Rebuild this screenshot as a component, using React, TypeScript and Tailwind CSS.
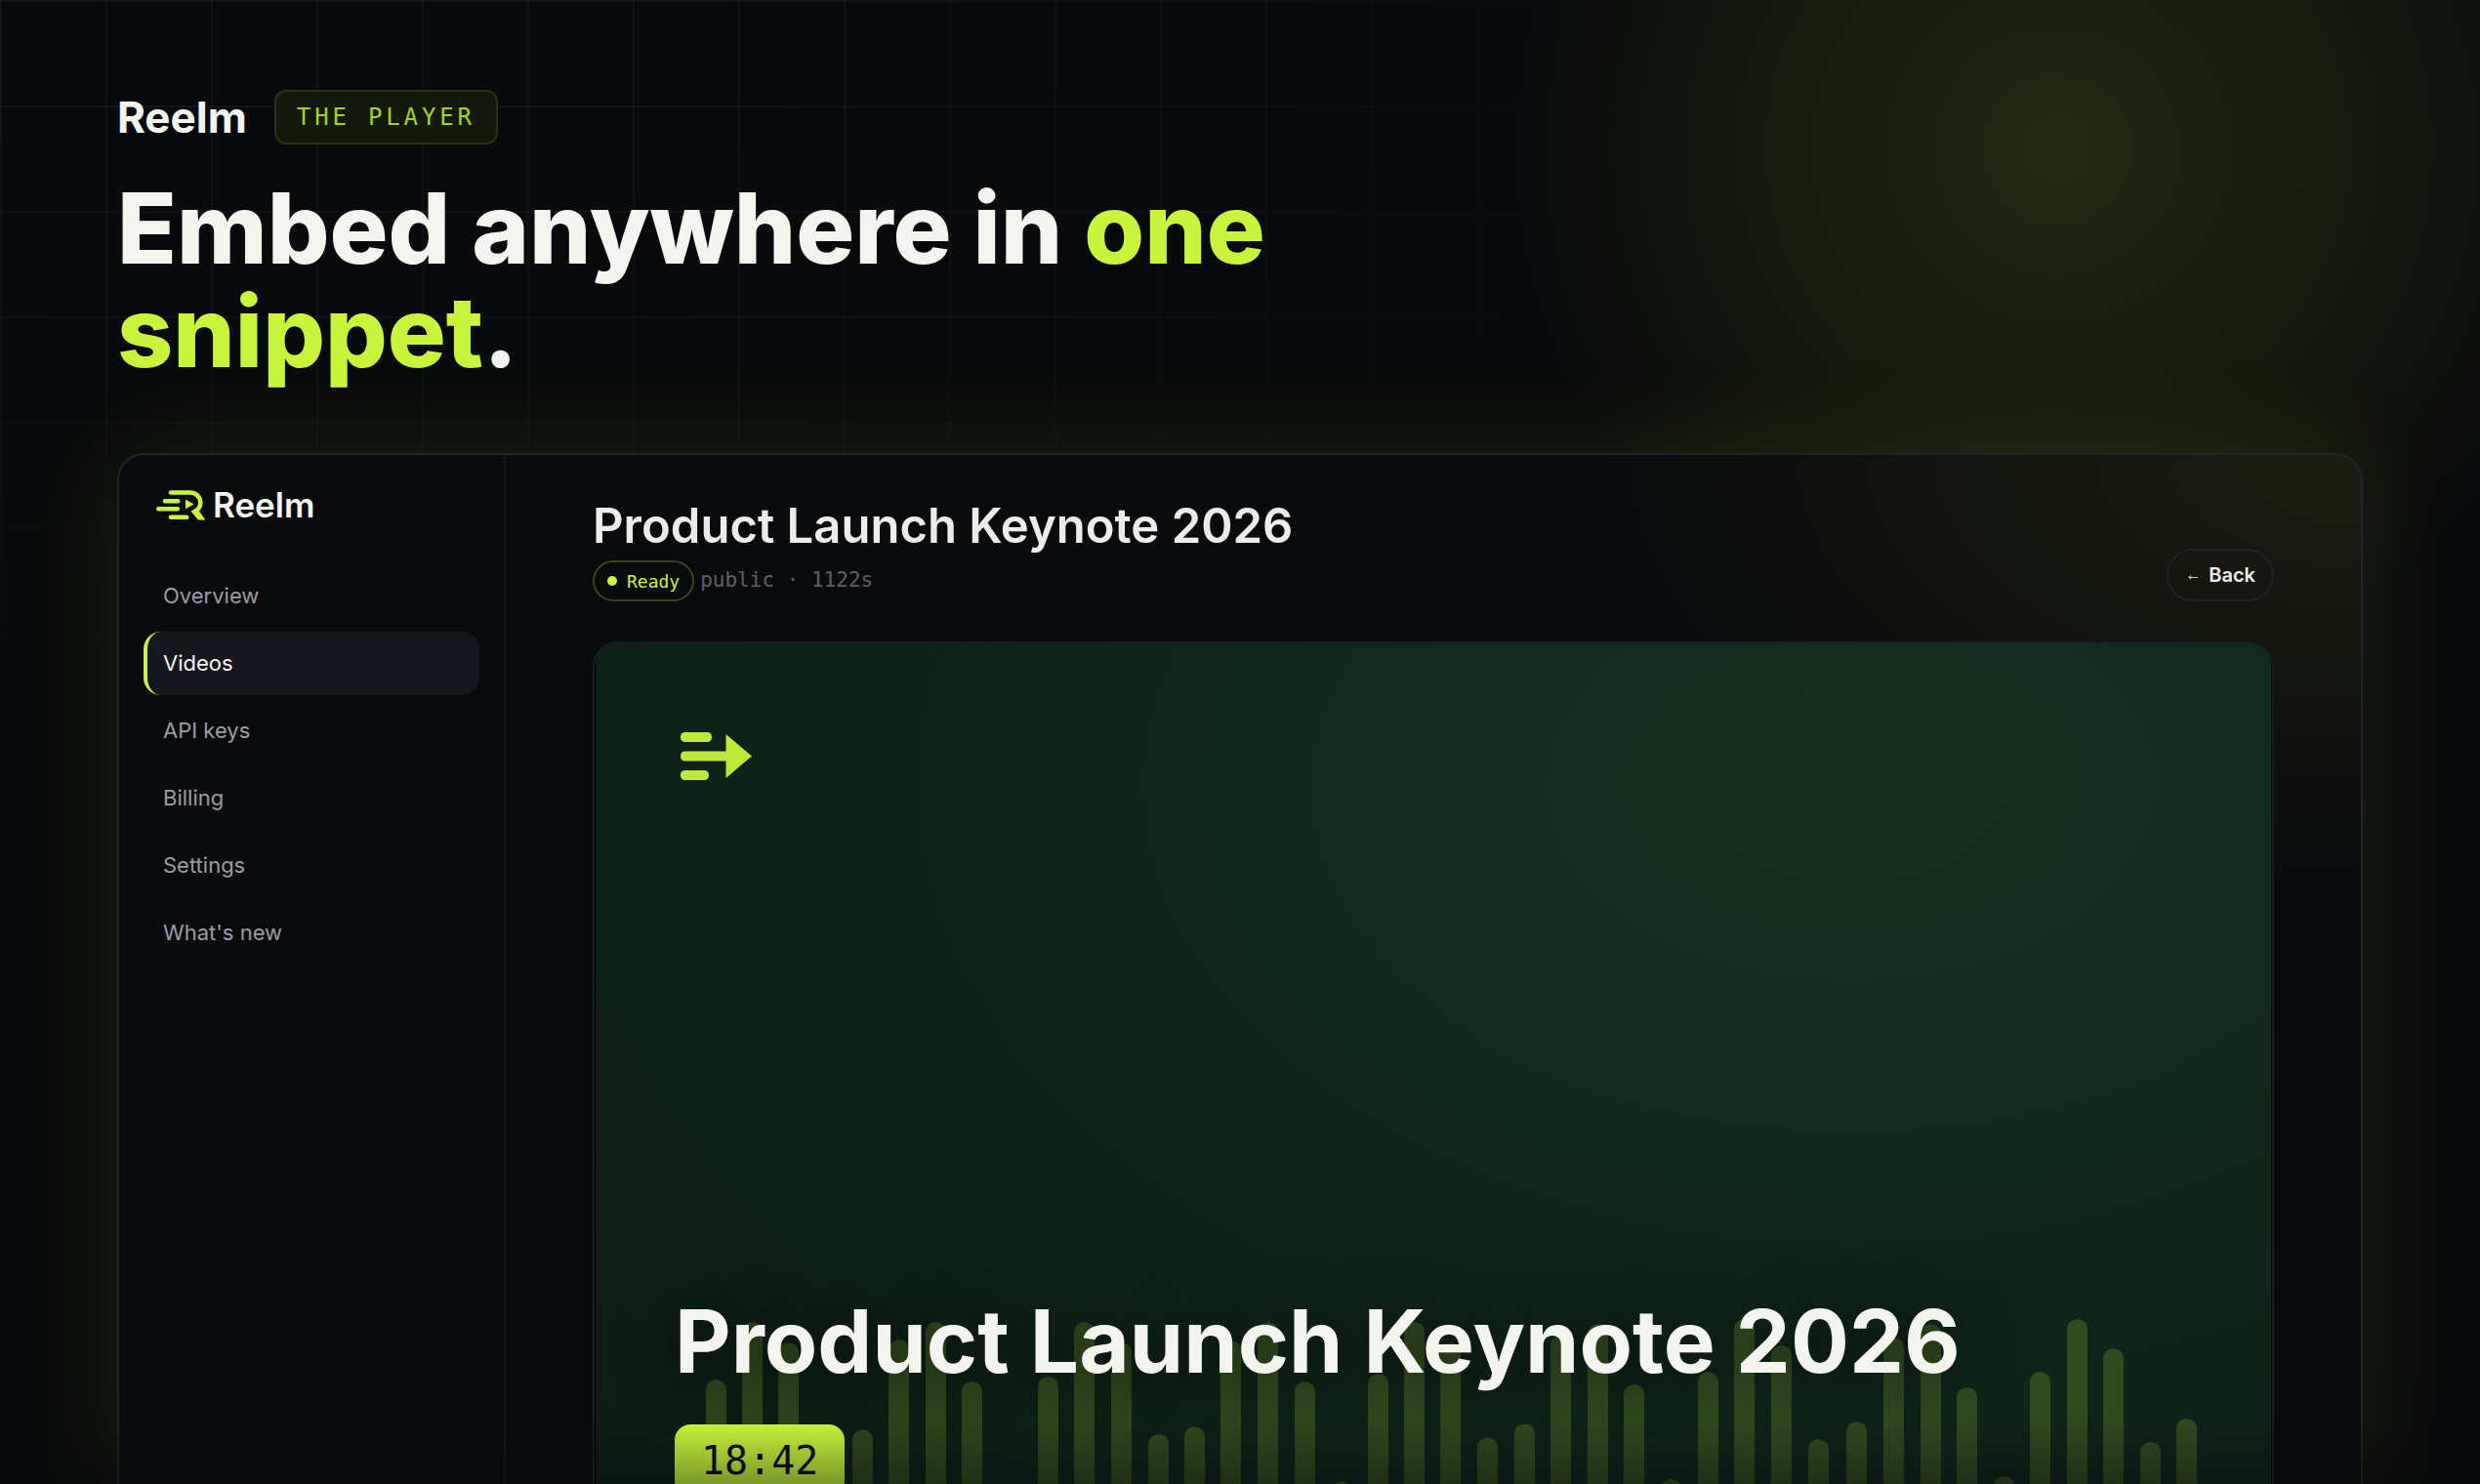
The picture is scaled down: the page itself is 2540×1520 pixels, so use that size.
import React from 'react';

const navItems = ['Overview', 'Videos', 'API keys', 'Billing', 'Settings', "What's new"];

// x and y of the top of each bar, in poster units (1716 x 965)
const bars: [number, number][] = [
  [113, 754], [150, 695], [187, 716], [225, 830], [263, 805], [300, 713], [338, 695], [375, 756], [413, 870],
  [453, 751], [490, 695], [528, 716], [566, 810], [603, 802], [640, 714], [678, 695], [716, 756], [754, 858],
  [791, 748], [828, 695], [865, 716], [903, 813], [941, 799], [978, 709], [1016, 697], [1053, 759], [1091, 856],
  [1129, 746], [1166, 692], [1204, 719], [1242, 815], [1281, 797], [1319, 711], [1357, 697], [1394, 762],
  [1432, 853], [1469, 746], [1507, 692], [1544, 722], [1582, 818], [1619, 794],
];

const LogoMark: React.FC = () => (
  <svg viewBox="0 0 50 31" className="h-[31px] w-[50px]" fill="none" aria-hidden="true">
    <path d="M15 2.500h19.500c6.500 0 10.800 4.700 10.800 10.300 0 3.800-2 7-5.300 8.600" stroke="#c8f43c" strokeWidth="4.600" strokeLinecap="round" />
    <path d="M35.500 21.500l6.500-3 2 3 6.300 9h-7.500z" fill="#c8f43c" />
    <path d="M9 11.300h13.200M2.300 19.300h19.500M15 27.700h16.200" stroke="#c8f43c" strokeWidth="4.600" strokeLinecap="round" />
    <path d="M30 9.500l8.500 5-8.500 4.700z" fill="#c8f43c" />
  </svg>
);

const Sidebar: React.FC = () => (
  <aside className="w-[396px] shrink-0 border-r-2 border-[#15171c] px-[25px] pt-[33px]">
    <a href="#" className="ml-[13px] flex h-[36px] items-center gap-2 text-[35px] leading-[36px] font-semibold text-[#f4f4ef]">
      <LogoMark />
      Reelm
    </a>
    <nav className="mt-[43px] flex flex-col gap-1">
      {navItems.map(item => (
        <a
          key={item}
          href="#"
          className={
            item === 'Videos'
              ? 'flex h-[65px] items-center rounded-[18px] border-l-4 border-[#c8f43c] bg-[#14171c] px-4 text-[22px] text-[#f4f4ef]'
              : 'flex h-[65px] items-center rounded-[18px] border-l-4 border-transparent px-4 text-[22px] text-[#9a9da6]'
          }
        >
          {item}
        </a>
      ))}
    </nav>
  </aside>
);

const Poster: React.FC = () => (
  <div className="mt-[41px] overflow-hidden rounded-[26px] border-2 border-[#1a1d23] bg-black px-px">
    <div className="relative aspect-video w-full bg-[radial-gradient(ellipse_at_75%_15%,#142f20,#10241a_55%,#0c1c14)]">
      <svg viewBox="0 0 1716 965" className="absolute inset-0 h-full w-full" aria-hidden="true">
        {bars.map(([x, y]) => (
          <rect key={x} x={x} y={y} width="21" height={965 - y} rx="10" fill="#c8f43c" fillOpacity="0.18" />
        ))}
      </svg>
      <div className="relative flex h-full flex-col px-[81px] pt-[91px]">
        <svg viewBox="0 0 74 50" className="ml-[6px] h-[50px] w-[74px]" fill="#bde83a" aria-hidden="true">
          <rect x="0" y="0" width="32" height="10" rx="4.500" />
          <rect x="0" y="19.500" width="50" height="10" rx="4.500" />
          <rect x="0" y="39" width="29" height="10" rx="4.500" />
          <path d="M46.500 2l26.500 22.500-26.500 22.500z" />
        </svg>
        <h3 className="mt-[524px] text-[89px] leading-[100px] font-bold whitespace-nowrap text-[#f4f4ef] [text-shadow:0_4px_60px_rgba(0,0,0,0.6)]">
          Product Launch Keynote 2026
        </h3>
        <span className="mt-[35px] self-start rounded-2xl bg-[#c8f43c] px-[27px] py-3 font-['DejaVu_Sans_Mono',monospace] text-[40px] leading-[50px] text-[#0a0b0d]">
          18:42
        </span>
      </div>
    </div>
  </div>
);

export default function App() {
  return (
    <div className="relative flex h-screen flex-col overflow-hidden bg-[#090a0c] px-[120px] pt-[92px] font-['Inter','Liberation_Sans',sans-serif] text-[#f4f4ef]">
      <div className="absolute inset-0 bg-[radial-gradient(circle_at_83%_10%,rgba(200,244,60,0.13),rgba(200,244,60,0.08)_260px,transparent_560px)]" />
      <div className="absolute inset-0 bg-[linear-gradient(rgba(255,255,255,0.04)_2px,transparent_2px),linear-gradient(90deg,rgba(255,255,255,0.04)_2px,transparent_2px)] bg-[size:108px_108px] [mask-image:radial-gradient(1500px_760px_at_15%_0%,black_20%,transparent)]" />

      <header className="relative">
        <div className="flex items-center gap-[28px]">
          <span className="text-[44px] leading-[56px] font-bold">Reelm</span>
          <span className="flex h-14 items-center rounded-xl border-2 border-[#2b3215] bg-[#15190c] px-[21px] font-['DejaVu_Sans_Mono',monospace] text-[24px] tracking-[0.16em] text-[#a3d416]">
            THE PLAYER
          </span>
        </div>
        <h1 className="mt-[33px] max-w-[1240px] text-[100px] leading-[106px] font-extrabold">
          Embed anywhere in <span className="text-[#c8f43c]">one snippet</span>.
        </h1>
      </header>

      <div className="relative mt-[71px] flex min-h-0 flex-1 overflow-hidden rounded-t-[28px] border-2 border-b-0 border-[#20242b] bg-[#0a0b0d] bg-[radial-gradient(780px_440px_at_100%_0%,#1c1f12,transparent)] shadow-[0_0_110px_rgba(200,244,60,0.11)]">
        <Sidebar />
        <main className="min-w-0 flex-1 px-[89px] pt-[44px]">
          <div className="flex items-end justify-between">
            <div>
              <h2 className="text-[49px] leading-[58px] font-semibold text-[#ececea]">Product Launch Keynote 2026</h2>
              <div className="mt-[6px] flex items-center gap-[6px] font-['DejaVu_Sans_Mono',monospace]">
                <span className="flex h-[42px] items-center gap-[10px] rounded-full border-2 border-[#3b451a] px-[13px] text-[18px] text-[#c8f43c]">
                  <span className="size-[10px] rounded-full bg-[#c8f43c]" />
                  Ready
                </span>
                <span className="text-[21px] text-[#5d606b]">public · 1122s</span>
              </div>
            </div>
            <button className="flex h-[54px] items-center gap-2 rounded-full border-2 border-[#20232a] px-[17px] text-[20px] font-semibold text-[#ececea]">
              <span className="font-['Liberation_Sans',sans-serif] text-[16px] font-normal">←</span>
              Back
            </button>
          </div>
          <Poster />
        </main>
      </div>

      <div className="pointer-events-none absolute inset-x-0 bottom-0 h-16 bg-gradient-to-b from-transparent to-[#090a0c]/40" />
    </div>
  );
}
